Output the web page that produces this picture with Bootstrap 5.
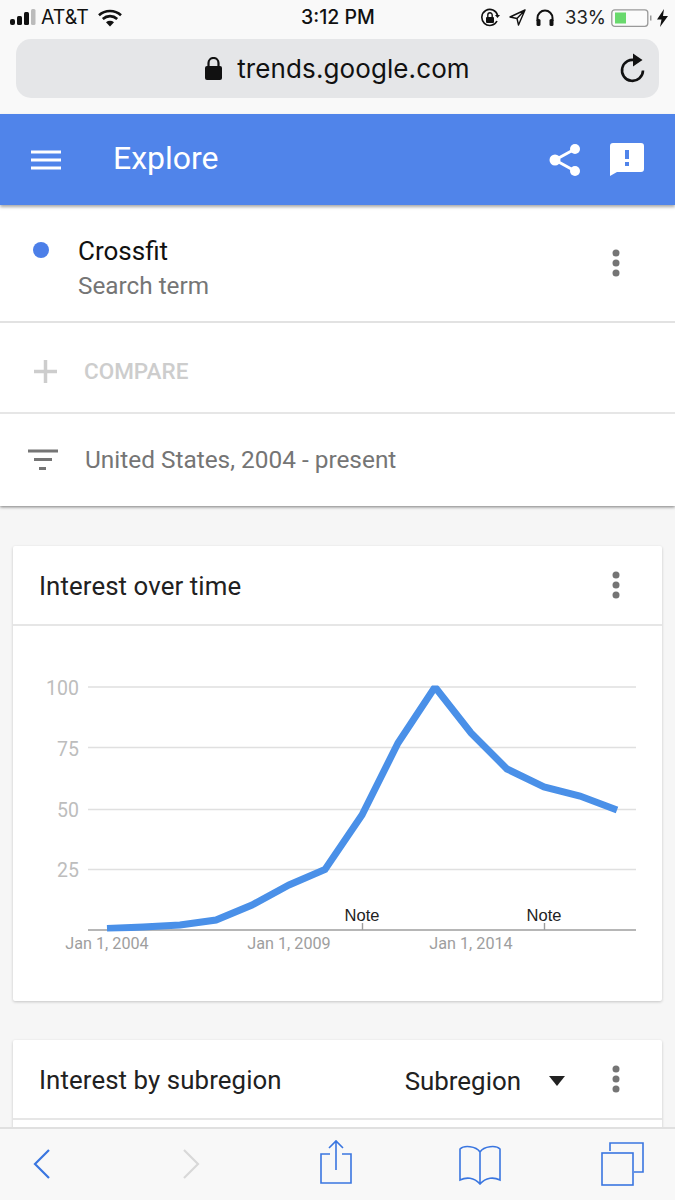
<!doctype html>
<html lang="en">
<head>
<meta charset="utf-8">
<title>Explore - Google Trends</title>
<link href="https://cdn.jsdelivr.net/npm/bootstrap@5.3.0/dist/css/bootstrap.min.css" rel="stylesheet">
<style>
html,body{height:1200px;overflow:hidden}
body{background:#f6f6f6;font-family:Roboto,"Liberation Sans",sans-serif;color:#212121}
.ios-chrome{background:#f9f9f9;height:114px;font-family:Inter,"Liberation Sans",sans-serif;color:#111}
.status-row{height:39px;padding:0 7px 4px 10px;position:relative}
.status-carrier{font-size:19.5px;margin-left:5px;font-weight:400}
.status-time{font-weight:500;font-size:19.5px;left:1px;right:0;text-align:center;position:absolute;top:5px;line-height:24px}
.status-pct{font-size:18.5px;color:#222;margin-left:10px}
.url-bar{height:59px;margin:0 16px;background:#e5e6e8;border-radius:15px;position:relative;font-size:26px;letter-spacing:.1px}
.url-text{margin-left:15px}
.reload-btn{position:absolute;right:13px;top:14px}
.app-head{background:#5084ea;height:91px;color:#fff;padding:0 31px;box-shadow:0 2px 3px rgba(0,0,0,.35);position:relative;z-index:2}
.app-title{font-size:32px;margin-left:52px;margin-top:-4px;font-weight:400;line-height:1}
.query-panel{background:#fff;box-shadow:0 1px 3px rgba(0,0,0,.5)}
.term-row{height:118px;border-bottom:2px solid #e2e2e2;padding:0 55px 0 33px}
.term-dot{width:16px;height:16px;background:#4c7fe8;border-radius:50%;margin-top:-26px}
.term-name{font-size:26px;color:#111;line-height:30px;margin-left:29px}
.term-sub{font-size:24.3px;color:#757575;line-height:30px;margin-top:5px;margin-left:29px}
.term-text{margin-top:10px}
.compare-row{height:91px;border-bottom:2px solid #e6e6e6;padding:8px 0 0 33px}
.compare-label{font-size:22.5px;font-weight:500;color:#cdcdcd;margin-left:26px}
.filter-row{height:92px;padding:0 0 0 28px;font-size:24.4px;color:#757575}
.filter-row span{margin-left:27px}
.trend-card{background:#fff;margin:0 13px;border-radius:2px;box-shadow:0 1px 3px rgba(0,0,0,.2)}
.card-one{margin-top:40px;height:455px}
.card-two{margin-top:39px;height:120px}
.trend-head{height:80px;border-bottom:2px solid #e6e6e6;padding:0 42px 0 26px}
.trend-title{font-size:25.8px;color:#212121;letter-spacing:.1px;margin-top:2px}
.region-pick{font-size:25.9px;color:#212121;margin-right:47px;margin-top:4px}
.region-arrow{width:0;height:0;border-left:8.5px solid transparent;border-right:8.5px solid transparent;border-top:10px solid #212121;margin-left:28px}
.chart-svg{display:block}
.tick-y{font:19.500px Roboto,sans-serif;fill:#bdbdbd;text-anchor:end}
.tick-x{font:16.200px Roboto,sans-serif;fill:#9e9e9e;text-anchor:middle}
.tick-note{font:16.500px "Liberation Sans",sans-serif;fill:#222;text-anchor:middle}
.safari-bar{height:73px;background:#f8f8f8;border-top:2px solid #e0e0e0}
.safari-bar svg{position:absolute}
</style>
</head>
<body>
<header class="ios-chrome">
  <div class="status-row d-flex align-items-center">
    <svg width="26" height="17" viewBox="0 0 26 17" class="flex-shrink-0"><rect x="0" y="10" width="5" height="6" rx="2" fill="#111"/><rect x="7" y="7" width="5" height="9" rx="1.500" fill="#111"/><rect x="14" y="3" width="5" height="13" rx="1.500" fill="#111"/><rect x="21" y="0" width="4.500" height="16" rx="1.500" fill="#bbb"/></svg>
    <span class="status-carrier">AT&amp;T</span>
    <svg width="24" height="18" viewBox="0 0 24 18" style="margin-left:9px"><path d="M1 6.200C7 .6 17 .6 23 6.200" fill="none" stroke="#111" stroke-width="2.600"/><path d="M4.800 10C9 6.200 15 6.200 19.200 10" fill="none" stroke="#111" stroke-width="2.600"/><path d="M8 13.200C10.400 11.300 13.600 11.300 16 13.200L12 17.400z" fill="#111"/></svg>
    <span class="status-time">3:12 PM</span>
    <div class="ms-auto d-flex align-items-center">
      <svg width="20" height="20" viewBox="0 0 20 20"><path d="M17 13A8 8 0 1 1 17.600 7.500" fill="none" stroke="#111" stroke-width="1.600"/><path d="M15 7h5l-2.500 3z" fill="#111"/><rect x="6" y="9" width="8" height="6" rx="1" fill="#111"/><path d="M7.800 9V7a2.200 2.200 0 0 1 4.400 0v2" fill="none" stroke="#111" stroke-width="1.400"/></svg>
      <svg width="17" height="17" viewBox="0 0 17 17" style="margin-left:9px"><path d="M16 1 1 8l7 1.500L9.500 16z M8 9.500 16 1" fill="none" stroke="#111" stroke-width="1.400" stroke-linejoin="round"/></svg>
      <svg width="20" height="18" viewBox="0 0 20 18" style="margin-left:9px"><path d="M2.500 12V9a7.500 7.500 0 0 1 15 0v3" fill="none" stroke="#111" stroke-width="2"/><rect x="1.500" y="10" width="4" height="7" rx="1.500" fill="#111"/><rect x="14.500" y="10" width="4" height="7" rx="1.500" fill="#111"/></svg>
      <span class="status-pct">33%</span>
      <svg width="44" height="20" viewBox="0 0 44 20" style="margin-left:5px"><rect x=".8" y="1.800" width="36" height="16.500" rx="3" fill="#fff" fill-opacity=".4" stroke="#999" stroke-width="1.300"/><rect x="4" y="4.500" width="11" height="11" fill="#69d96d"/><rect x="39" y="7.500" width="1.500" height="5" fill="#999"/></svg>
      <svg width="11" height="18" viewBox="0 0 11 18" style="margin-left:2px"><path d="M7 0 0 10.500h4.500L3 18l8-11H6z" fill="#111"/></svg>
    </div>
  </div>
  <div class="url-bar d-flex align-items-center justify-content-center">
    <svg width="17" height="23" viewBox="0 0 17 23"><rect x="0" y="9" width="17" height="14" rx="2" fill="#111"/><path d="M3.500 10V6a5 5 0 0 1 10 0v4" fill="none" stroke="#111" stroke-width="2.200"/></svg>
    <span class="url-text">trends.google.com</span>
    <svg class="reload-btn" width="28" height="30" viewBox="0 0 28 30"><path d="M18 7.500A10.500 10.500 0 1 0 25 17.500" fill="none" stroke="#111" stroke-width="2.600"/><path d="M15 .5 24.500 7 15 13.500z" fill="#111"/></svg>
  </div>
</header>

<nav class="app-head d-flex align-items-center">
  <svg width="30" height="20" viewBox="0 0 30 20"><path d="M0 2h30M0 10h30M0 18h30" stroke="#fff" stroke-width="3"/></svg>
  <span class="app-title">Explore</span>
  <svg class="ms-auto" width="32" height="34" viewBox="0 0 32 34" style="margin-right:29px"><path d="M6 17 26 6M6 17l20 11" stroke="#fff" stroke-width="3"/><circle cx="6" cy="17" r="5.500" fill="#fff"/><circle cx="26" cy="6" r="5" fill="#fff"/><circle cx="26" cy="28" r="5" fill="#fff"/></svg>
  <svg width="34" height="33" viewBox="0 0 34 33"><path d="M3 0h28a3 3 0 0 1 3 3v23a3 3 0 0 1-3 3H7l-7 4V3a3 3 0 0 1 3-3z" fill="#fff"/><rect x="15" y="7" width="4" height="9" fill="#5084ea"/><rect x="15" y="19" width="4" height="4" fill="#5084ea"/></svg>
</nav>

<section class="query-panel">
  <div class="term-row d-flex align-items-center">
    <span class="term-dot flex-shrink-0"></span>
    <div class="flex-grow-1 term-text">
      <div class="term-name">Crossfit</div>
      <div class="term-sub">Search term</div>
    </div>
    <svg width="8" height="28" viewBox="0 0 8 28"><circle cx="4" cy="4" r="3.500" fill="#757575"/><circle cx="4" cy="14" r="3.500" fill="#757575"/><circle cx="4" cy="24" r="3.500" fill="#757575"/></svg>
  </div>
  <div class="compare-row d-flex align-items-center">
    <svg width="25" height="25" viewBox="0 0 25 25"><path d="M12.500 1v23M1 12.500h23" stroke="#cdcdcd" stroke-width="3.500"/></svg>
    <span class="compare-label">COMPARE</span>
  </div>
  <div class="filter-row d-flex align-items-center">
    <svg width="30" height="22" viewBox="0 0 30 22"><path d="M0 2h30M6 10.500h18M11 19.500h7" stroke="#757575" stroke-width="3"/></svg>
    <span>United States, 2004 - present</span>
  </div>
</section>

<section class="trend-card card-one">
  <div class="trend-head d-flex align-items-center justify-content-between">
    <span class="trend-title">Interest over time</span>
    <svg width="8" height="28" viewBox="0 0 8 28"><circle cx="4" cy="4" r="3.500" fill="#757575"/><circle cx="4" cy="14" r="3.500" fill="#757575"/><circle cx="4" cy="24" r="3.500" fill="#757575"/></svg>
  </div>
  <svg class="chart-svg" width="649" height="375" viewBox="13 626 649 375">
    <defs><clipPath id="plotclip"><rect x="88" y="685.500" width="548" height="246"/></clipPath></defs>
    <path d="M88 687h548M88 747.500h548M88 809.500h548M88 869.500h548" stroke="#e0e0e0" stroke-width="1.600"/>
    <path d="M88 930h548M362.500 923v7M544.500 923v7" stroke="#9e9e9e" stroke-width="1.400"/>
    <text class="tick-y" x="79" y="695">100</text>
    <text class="tick-y" x="79" y="756">75</text>
    <text class="tick-y" x="79" y="817">50</text>
    <text class="tick-y" x="79" y="877">25</text>
    <text class="tick-x" x="107" y="949">Jan 1, 2004</text>
    <text class="tick-x" x="289" y="949">Jan 1, 2009</text>
    <text class="tick-x" x="471" y="949">Jan 1, 2014</text>
    <text class="tick-note" x="362" y="921">Note</text>
    <text class="tick-note" x="544" y="921">Note</text>
    <polyline clip-path="url(#plotclip)" points="107,928.500 143,927 180,925 216,920 252,905 289,885 325,869.500 362,815 398,743 435,687 471,733 507,769 544,787 580,796 617,810" fill="none" stroke="#4a90e8" stroke-width="7" stroke-linejoin="miter"/>
  </svg>
</section>

<section class="trend-card card-two">
  <div class="trend-head d-flex align-items-center">
    <span class="trend-title">Interest by subregion</span>
    <div class="region-pick ms-auto d-flex align-items-center"><span>Subregion</span><span class="region-arrow"></span></div>
    <svg width="8" height="28" viewBox="0 0 8 28"><circle cx="4" cy="4" r="3.500" fill="#757575"/><circle cx="4" cy="14" r="3.500" fill="#757575"/><circle cx="4" cy="24" r="3.500" fill="#757575"/></svg>
  </div>
</section>

<footer class="safari-bar fixed-bottom">
  <svg style="left:32px;top:19px" width="20" height="32" viewBox="0 0 20 32"><path d="M17 2 3 16l14 14" fill="none" stroke="#3a76e0" stroke-width="2.200"/></svg>
  <svg style="left:181px;top:19px" width="20" height="32" viewBox="0 0 20 32"><path d="M3 2l14 14L3 30" fill="none" stroke="#d8d8d8" stroke-width="2.200"/></svg>
  <svg style="left:320px;top:10px" width="32" height="46" viewBox="0 0 32 46"><path d="M10 15H1v29h30V15h-9M16 31V2M9 9l7-7 7 7" fill="none" stroke="#3a76e0" stroke-width="1.600"/></svg>
  <svg style="left:458px;top:16px" width="44" height="40" viewBox="0 0 44 40"><path d="M22 7C18 1 6 0 2 4v31c6-3 14-3 20 4 6-7 14-7 20-4V4c-4-4-16-3-20 3zM22 7v32" fill="none" stroke="#3a76e0" stroke-width="1.600"/></svg>
  <svg style="left:601px;top:13px" width="43" height="44" viewBox="0 0 43 44"><path d="M9 9V1h33v29h-9" fill="none" stroke="#3a76e0" stroke-width="1.600"/><rect x="1" y="11" width="31" height="32" fill="none" stroke="#3a76e0" stroke-width="1.600"/></svg>
</footer>
<script src="https://cdn.jsdelivr.net/npm/bootstrap@5.3.0/dist/js/bootstrap.bundle.min.js"></script>
</body>
</html>
